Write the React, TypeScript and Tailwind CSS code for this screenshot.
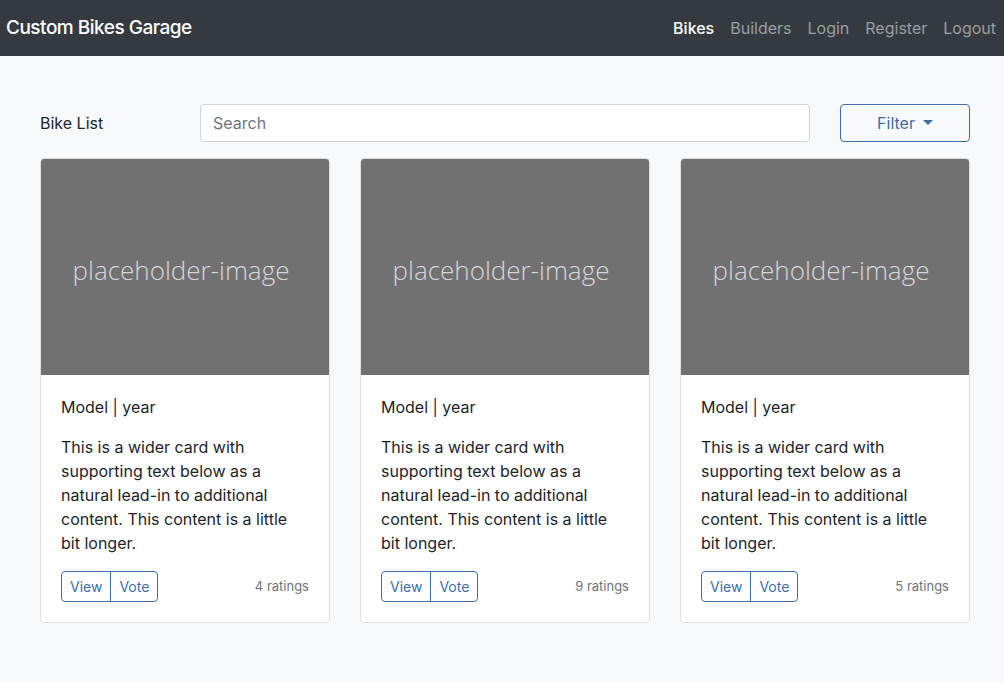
const cards = [
  { id: 1, ratings: 4 },
  { id: 2, ratings: 9 },
  { id: 3, ratings: 5 },
];

function BikeCard({ ratings }: { ratings: number }) {
  return (
    <div className="flex flex-col overflow-hidden rounded border border-[#dfdfdf] bg-white">
      {/* Image placeholder */}
      <div className="flex h-[216px] items-center justify-center bg-[#717171] pt-1.5 pr-2">
        <span className="font-['Open_Sans',sans-serif] text-[26px] font-light text-[#d6d6d6]">
          placeholder-image
        </span>
      </div>

      <div className="p-5">
        <h5 className="mb-4 text-base leading-6 text-[#212529]">Model | year</h5>
        <p className="mb-4 text-base leading-6 text-[#212529]">
          This is a wider card with supporting text below as a natural lead-in to additional
          content. This content is a little bit longer.
        </p>
        <div className="flex items-center justify-between">
          <div className="flex">
            <button className="h-[31px] rounded-l border border-[#3c6ea8] px-2 text-sm text-[#3c6ea8]">
              View
            </button>
            <button className="-ml-px h-[31px] rounded-r border border-[#3c6ea8] px-2 text-sm text-[#3c6ea8]">
              Vote
            </button>
          </div>
          <small className="text-[13px] text-[#6c757d]">{ratings} ratings</small>
        </div>
      </div>
    </div>
  );
}

export default function App() {
  return (
    <div className="min-h-screen bg-[#f8f9fa] font-['Inter',sans-serif] text-[#212529]">
      {/* Navbar */}
      <nav className="flex h-14 items-center justify-between bg-[#343a40] pl-1.5">
        <span className="text-[19px] font-medium tracking-[-0.5px] text-white">Custom Bikes Garage</span>
        <div className="flex">
          <a className="px-2 text-base font-medium text-white">Bikes</a>
          <a className="px-2 text-base text-white/50">Builders</a>
          <a className="px-2 text-base text-white/50">Login</a>
          <a className="px-2 text-base text-white/50">Register</a>
          <a className="px-2 text-base text-white/50">Logout</a>
        </div>
      </nav>

      <div className="pt-12 pr-[34px] pb-14 pl-10">
        {/* Toolbar */}
        <div className="mb-4 flex items-center">
          <div className="w-40 text-base">Bike List</div>
          <input
            type="text"
            placeholder="Search"
            className="h-[38px] w-[610px] rounded border border-[#ced4da] bg-white px-3 text-base placeholder:text-[#6c757d]"
          />
          <button className="ml-[30px] flex h-[38px] flex-1 items-center justify-center gap-2 rounded-sm border border-[#3c6ea8] text-base text-[#3c6ea8]">
            Filter
            <svg width="10" height="6" viewBox="0 0 10 6">
              <path d="M0 0h10L5 5z" fill="currentColor" />
            </svg>
          </button>
        </div>

        {/* Cards */}
        <div className="grid grid-cols-3 gap-[30px]">
          {cards.map((c) => (
            <BikeCard key={c.id} ratings={c.ratings} />
          ))}
        </div>
      </div>
    </div>
  );
}
